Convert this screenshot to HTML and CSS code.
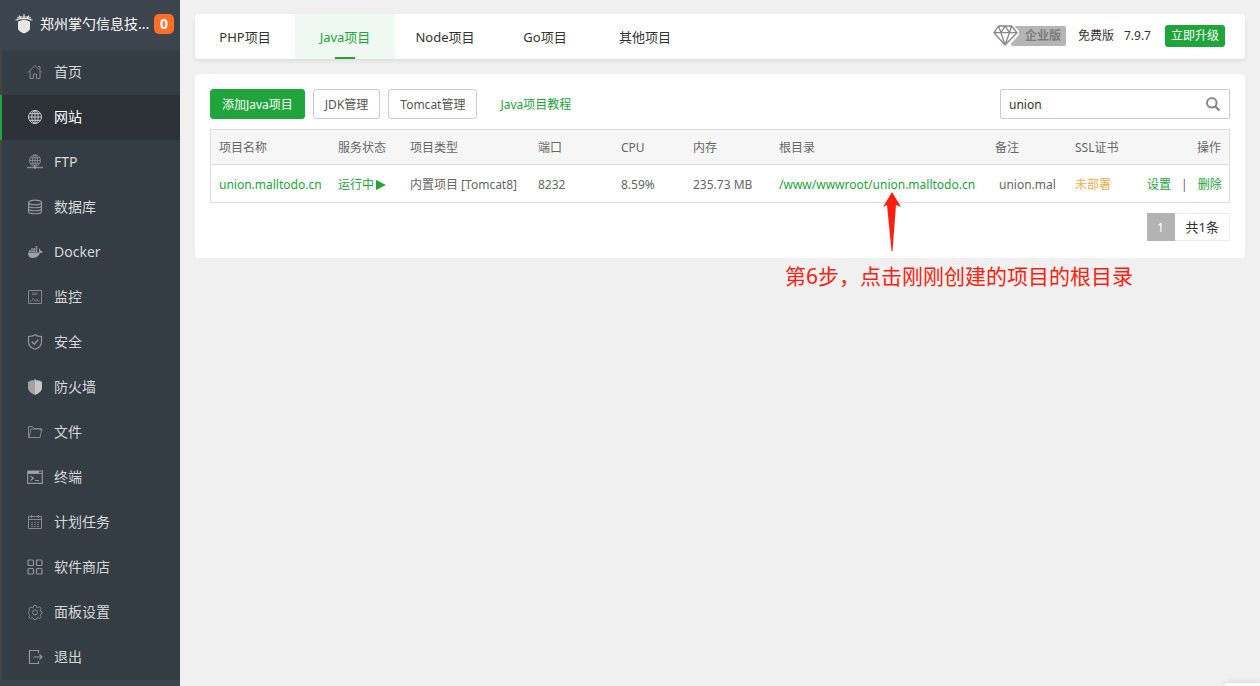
FILE: index.html
```html
<!DOCTYPE html>
<html lang="zh-CN">
<head>
<meta charset="utf-8">
<title>Java项目</title>
<link rel="stylesheet" href="styles.css">
</head>
<body>
<div class="layout">
  <aside class="sidebar">
    <div class="brand">
      <svg class="brand-logo" viewBox="0 0 18 20" aria-hidden="true">
        <path d="M9 0v4M2 4Q9 1.500 16 4M.5 6.300Q9 2.500 17.500 6.300M4 1.500l2 3M14 1.500l-2 3" fill="none" stroke="#e6e6e6" stroke-width="1.100"/>
        <path d="M3 7.500l3-1 3-1 3 1 3 1V15Q14 17.500 9 19.500 4 17.500 3 15z" fill="#e6e6e6"/>
      </svg>
      <span class="brand-name">郑州掌勺信息技...</span>
      <span class="brand-badge">0</span>
    </div>
    <nav class="menu">
      <a class="menu-item" href="#"><svg class="icon" viewBox="0 0 16 16"><path d="M1 8.500L8 1.500l7 7M3 7v7.500h3.500V10h3v4.500H13V7M11 2.500h2v3"/></svg>首页</a>
      <a class="menu-item active" href="#"><svg class="icon" viewBox="0 0 16 16"><circle cx="8" cy="8" r="6.500"/><ellipse cx="8" cy="8" rx="3.200" ry="6.500"/><path d="M8 1.500v13M1.500 8h13M2.500 4.700h11M2.500 11.300h11"/></svg>网站</a>
      <a class="menu-item" href="#"><svg class="icon" viewBox="0 0 16 16"><circle cx="8" cy="6.500" r="5.500"/><ellipse cx="8" cy="6.500" rx="2.600" ry="5.500"/><path d="M8 1v12M2.500 6.500h11M3.500 3.800h9M3.500 9.300h9"/><path d="M0 13.500h16M6.500 13.500h3" stroke-width="1.500"/><circle cx="8" cy="13.500" r="1.200" class="solid"/></svg>FTP</a>
      <a class="menu-item" href="#"><svg class="icon bold" viewBox="0 0 16 16"><ellipse cx="8" cy="3.500" rx="6.500" ry="2.300"/><path d="M1.500 3.500v9c0 3 13 3 13 0v-9M1.500 6.500c0 3 13 3 13 0M1.500 9.500c0 3 13 3 13 0"/></svg>数据库</a>
      <a class="menu-item" href="#"><svg class="icon" viewBox="0 0 16 16"><path class="solid" d="M1 8.500h11q.5-2-.3-3.300l.8-.7Q13.600 5.500 13.500 7q1.500-.3 2.500.5-.8 1.500-3 1.500-2 5-7.500 5Q1 14 1 8.500zM2 6.300h1.700V8H2zM4.200 6.300h1.700V8H4.200zM6.400 6.300h1.700V8H6.400zM8.600 6.300h1.700V8H8.600zM4.200 4.300h1.700v1.500H4.200zM6.400 4.300h1.700v1.500H6.400zM8.600 4.300h1.700v1.500H8.600zM8.600 2.300h1.700v1.500H8.600z"/></svg>Docker</a>
      <a class="menu-item" href="#"><svg class="icon" viewBox="0 0 16 16"><path d="M1.500 1.500h13v13h-13z"/><path d="M5 4h6M5 5.500h5M3 12h2l1.500-3 2 4 1.500-3 1 2h2" opacity=".7"/></svg>监控</a>
      <a class="menu-item" href="#"><svg class="icon bold" viewBox="0 0 16 16"><path d="M8 .7Q10.500 2.500 14.500 2.500V8q0 5-6.500 7.300Q1.500 13 1.500 8V2.500Q5.500 2.500 8 .7z"/><path d="M4.700 7.500l2.600 2.700 4-4.500" stroke-width="1.400"/></svg>安全</a>
      <a class="menu-item" href="#"><svg class="icon" viewBox="0 0 16 16"><path d="M8 0v16Q1 13 1 9V2.500L2.500 3V1.500L4.500 2V1l2 .5z" fill="#a3a3a3" stroke="none"/><path d="M8 0v16q7-3 7-7V2.500l-1.500.5V1.500l-2 .5V1l-2 .5z" fill="#c6c6c6" stroke="none"/></svg>防火墙</a>
      <a class="menu-item" href="#"><svg class="icon" viewBox="0 0 16 16"><path d="M1.500 13.500V2.500h4l1.500 2h6.500v2M1.500 13.500h11.500l2-8.500H4L2 13.500"/></svg>文件</a>
      <a class="menu-item" href="#"><svg class="icon bold" viewBox="0 0 16 16"><path d="M.7 2h14.600v12.300H.7zM.7 4.500h14.600M3.500 7l3 2.200-3 2.300M8 11.500h4"/><path class="solid" d="M1 2h11v2H1z"/></svg>终端</a>
      <a class="menu-item" href="#"><svg class="icon" viewBox="0 0 16 16"><path d="M1.500 2.500h13v12h-13zM1.500 5.500h13M4.500 1v3M11.500 1v3"/><path d="M4 8.500h8M4 10.500h8M4 12.500h8" stroke-dasharray="2 1" opacity=".7"/></svg>计划任务</a>
      <a class="menu-item" href="#"><svg class="icon bold" viewBox="0 0 16 16"><rect x="1" y="1" width="5.500" height="5.500" rx="1"/><rect x="9.500" y="1" width="5.500" height="5.500" rx="1"/><rect x="1" y="9.500" width="5.500" height="5.500" rx="1"/><rect x="9.500" y="9.500" width="5.500" height="5.500" rx="1"/></svg>软件商店</a>
      <a class="menu-item" href="#"><svg class="icon" viewBox="0 0 16 16"><path d="M6.800 1.500h2.400l.5 1.800 1.200.5 1.600-1 1.700 1.700-1 1.600.5 1.200 1.300.5v1.600l-1.300.7-.5 1.200 1 1.600-1.700 1.700-1.600-1-1.200.5-.5 1.400H6.800l-.5-1.400-1.200-.5-1.600 1-1.700-1.700 1-1.600-.5-1.200L1.500 9.400V7.800l.8-.5.5-1.200-1-1.600 1.700-1.700 1.600 1 1.200-.5z"/><circle cx="8" cy="8.400" r="2.500"/></svg>面板设置</a>
      <a class="menu-item" href="#"><svg class="icon bold" viewBox="0 0 16 16"><path d="M11.500 4V1.500h-9v13h9V12M6.500 8H15M12.500 5.500L15 8l-2.500 2.500"/></svg>退出</a>
    </nav>
  </aside>

  <main class="content">
    <header class="topbar">
      <nav class="tabs">
        <a class="tab" href="#">PHP项目</a>
        <a class="tab current" href="#">Java项目</a>
        <a class="tab" href="#">Node项目</a>
        <a class="tab" href="#">Go项目</a>
        <a class="tab" href="#">其他项目</a>
      </nav>
      <div class="account">
        <span class="edition">
          <svg class="edition-gem" viewBox="0 0 26 22" aria-hidden="true">
            <path d="M6 1h13l6 7-12 13L1 8z" fill="#fff" stroke="#fff" stroke-width="4"/>
            <path d="M5.500 1h13L24 7.700 12 20 1 7.700zM1 7.700h23M5.500 1L8 7.700 12 20l4.500-12.300L18.500 1M8 7.700L12 1l4.500 6.700" fill="none" stroke="#888" stroke-width="1.300" stroke-linejoin="round"/>
          </svg>
          <span class="edition-name">企业版</span>
        </span>
        <span>免费版</span>
        <span class="version">7.9.7</span>
        <button class="upgrade" type="button">立即升级</button>
      </div>
    </header>

    <section class="panel">
      <div class="toolbar">
        <button class="btn primary" type="button">添加Java项目</button>
        <button class="btn" type="button">JDK管理</button>
        <button class="btn" type="button">Tomcat管理</button>
        <a class="guide" href="#">Java项目教程</a>
        <form class="search">
          <input class="search-input" type="text" value="union" aria-label="搜索项目">
          <button class="search-btn" type="button" aria-label="搜索">
            <svg viewBox="0 0 16 16" width="16" height="16"><circle cx="6.800" cy="6.800" r="4.800" fill="none" stroke="#888" stroke-width="2"/><path d="M10.300 10.300l4 4" stroke="#888" stroke-width="2.400"/></svg>
          </button>
        </form>
      </div>

      <table class="projects">
        <colgroup>
          <col class="c-name"><col class="c-state"><col class="c-type"><col class="c-port"><col class="c-cpu"><col class="c-mem"><col class="c-root"><col class="c-note"><col class="c-ssl"><col class="c-ops">
        </colgroup>
        <thead>
          <tr><th>项目名称</th><th>服务状态</th><th>项目类型</th><th>端口</th><th>CPU</th><th>内存</th><th>根目录</th><th>备注</th><th>SSL证书</th><th class="ops">操作</th></tr>
        </thead>
        <tbody>
          <tr>
            <td><a href="#">union.malltodo.cn</a></td>
            <td><a class="state" href="#">运行中<svg viewBox="0 0 10 12" width="10" height="12"><path d="M0 1l10 5-10 5z" fill="#20a53a"/></svg></a></td>
            <td>内置项目 [Tomcat8]</td>
            <td>8232</td>
            <td>8.59%</td>
            <td>235.73 MB</td>
            <td><a href="#">/www/wwwroot/union.malltodo.cn</a></td>
            <td><span class="note">union.mal</span></td>
            <td><a class="warn" href="#">未部署</a></td>
            <td class="ops"><a href="#">设置</a><span class="bar">|</span><a href="#">删除</a></td>
          </tr>
        </tbody>
      </table>

      <div class="pager">
        <span class="page">1</span><span class="total">共1条</span>
      </div>
      <div class="callout">
        <svg class="callout-arrow" viewBox="0 0 18 60" aria-hidden="true"><path d="M9 0l9 15-5-2-3.500 46h-1L4 13l-4 2z" fill="#ff1e10"/></svg>
        <p class="callout-text">第6步，点击刚刚创建的项目的根目录</p>
      </div>
    </section>
  </main>
</div>
<div class="dock"></div>
</body>
</html>
```

FILE: styles.css
```css
* { box-sizing: border-box; }
body {
  margin: 0;
  background: #f0f0f0;
  color: #333;
  font: 12px/18px "Noto Sans", "Noto Sans CJK SC", sans-serif;
}
a { color: #20a53a; text-decoration: none; }
button, input { font: inherit; color: inherit; }
.layout { display: flex; min-height: 100vh; }

.sidebar { flex: none; width: 180px; background: #3c444d; }
.brand {
  display: flex;
  align-items: center;
  height: 50px;
  padding: 0 6px 2px 15px;
  color: #fff;
  font-size: 14px;
}
.brand-logo { flex: none; width: 18px; height: 20px; margin-right: 7px; }
.brand-name { flex: 1; white-space: nowrap; }
.brand-badge {
  flex: none;
  width: 20px;
  height: 20px;
  border-radius: 5px;
  background: #ff6f26;
  font-weight: 700;
  line-height: 20px;
  text-align: center;
}
.menu { background: #353d44; }
.menu-item {
  display: flex;
  align-items: center;
  gap: 11px;
  height: 45px;
  padding: 0 0 2px 25px;
  border-left: 2px solid #444;
  color: #d6d7d9;
  font-size: 14px;
}
.menu-item.active { background: #2c3138; border-left-color: #20a53a; color: #fff; }
.icon { width: 16px; height: 16px; fill: none; stroke: #84898d; stroke-width: 1; }
.icon.bold { stroke: #92979a; stroke-width: 1.2; }
.icon .solid { fill: #a0a2a4; stroke: none; }
.active .icon { stroke: #ccc; }

.content { flex: 1; min-width: 0; padding: 14px 15px; }
.topbar {
  display: flex;
  justify-content: space-between;
  height: 45px;
  margin-bottom: 15px;
  border-radius: 4px;
  background: #fff;
  box-shadow: 0 2px 4px rgba(0, 0, 0, .08);
}
.tabs { display: flex; }
.tab {
  position: relative;
  width: 100px;
  color: #333;
  font-size: 13px;
  line-height: 46px;
  text-align: center;
}
.tab.current { background: #eff8f1; color: #20a53a; }
.tab.current::after {
  content: "";
  position: absolute;
  bottom: 0;
  left: 40px;
  width: 20px;
  height: 2px;
  background: #20a53a;
}
.account { display: flex; align-items: center; padding: 0 20px 1px 0; }
.edition { display: flex; align-items: center; margin-right: 12px; }
.edition-gem { z-index: 1; width: 26px; height: 22px; margin-right: -8px; }
.edition-name {
  padding: 0 5px 0 14px;
  border-radius: 2px;
  background: #b5b5b5;
  color: #7c7c7c;
  font-weight: 700;
  line-height: 20px;
}
.version { margin: 0 14px 0 10px; }
.upgrade {
  height: 22px;
  padding: 0 6px;
  border: 0;
  border-radius: 3px;
  background: #20a53a;
  color: #fff;
}

.panel {
  position: relative;
  padding: 15px 15px 17px;
  border-radius: 4px;
  background: #fff;
}
.toolbar { display: flex; align-items: center; gap: 8px; margin-bottom: 10px; }
.btn {
  height: 30px;
  padding: 2px 11px 0;
  border: 1px solid #ccc;
  border-radius: 3px;
  background: #fff;
  color: #555;
}
.btn.primary { border-color: #20a53a; background: #20a53a; color: #fff; }
.guide { margin-left: 15px; padding-top: 2px; }
.search { position: relative; width: 230px; margin-left: auto; }
.search-input {
  display: block;
  width: 100%;
  height: 30px;
  padding: 1px 36px 0 8px;
  border: 1px solid #ccc;
  border-radius: 2px;
  background: #fff;
}
.search-btn {
  position: absolute;
  top: 0;
  right: 0;
  display: grid;
  place-items: center;
  width: 34px;
  height: 30px;
  padding: 0;
  border: 0;
  background: none;
}

.projects {
  width: 100%;
  border: 1px solid #ddd;
  border-collapse: separate;
  border-spacing: 0;
  table-layout: fixed;
  color: #666;
}
.projects th, .projects td { padding: 2px 8px 0; text-align: left; white-space: nowrap; }
.projects th {
  height: 35px;
  border-bottom: 1px solid #ddd;
  background: #f6f6f6;
  font-weight: 400;
}
.projects td { height: 37px; }
.projects .ops { text-align: right; }
.c-name { width: 119px; }
.c-state { width: 72px; }
.c-type { width: 128px; }
.c-port { width: 83px; }
.c-cpu { width: 72px; }
.c-mem { width: 86px; }
.c-note { width: 80px; }
.c-ssl { width: 72px; }
.c-ops { width: 90px; }
.state { display: flex; align-items: center; gap: 2px; }
.note { padding-left: 4px; }
.warn { color: #f0ad4e; }
.bar { margin: 0 10px; }

.pager { display: flex; justify-content: flex-end; margin-top: 10px; font-size: 13px; line-height: 26px; }
.page { width: 28px; border: 1px solid #b3b3b3; background: #b3b3b3; color: #fff; text-align: center; }
.total { padding: 0 10px 0 11px; border: 1px solid #ececec; border-left: 0; }

.callout { position: absolute; top: 118px; left: 590px; color: #ff1e10; pointer-events: none; }
.callout-arrow { display: block; width: 18px; height: 60px; margin-left: 98px; }
.callout-text { margin: 9px 0 0; font-size: 21px; line-height: 30px; white-space: nowrap; }
.dock {
  position: fixed;
  right: 0;
  bottom: 0;
  width: 35px;
  height: 3px;
  border-top-left-radius: 3px;
  background: #fff;
  box-shadow: 0 0 6px rgba(0, 0, 0, .2);
}
```
